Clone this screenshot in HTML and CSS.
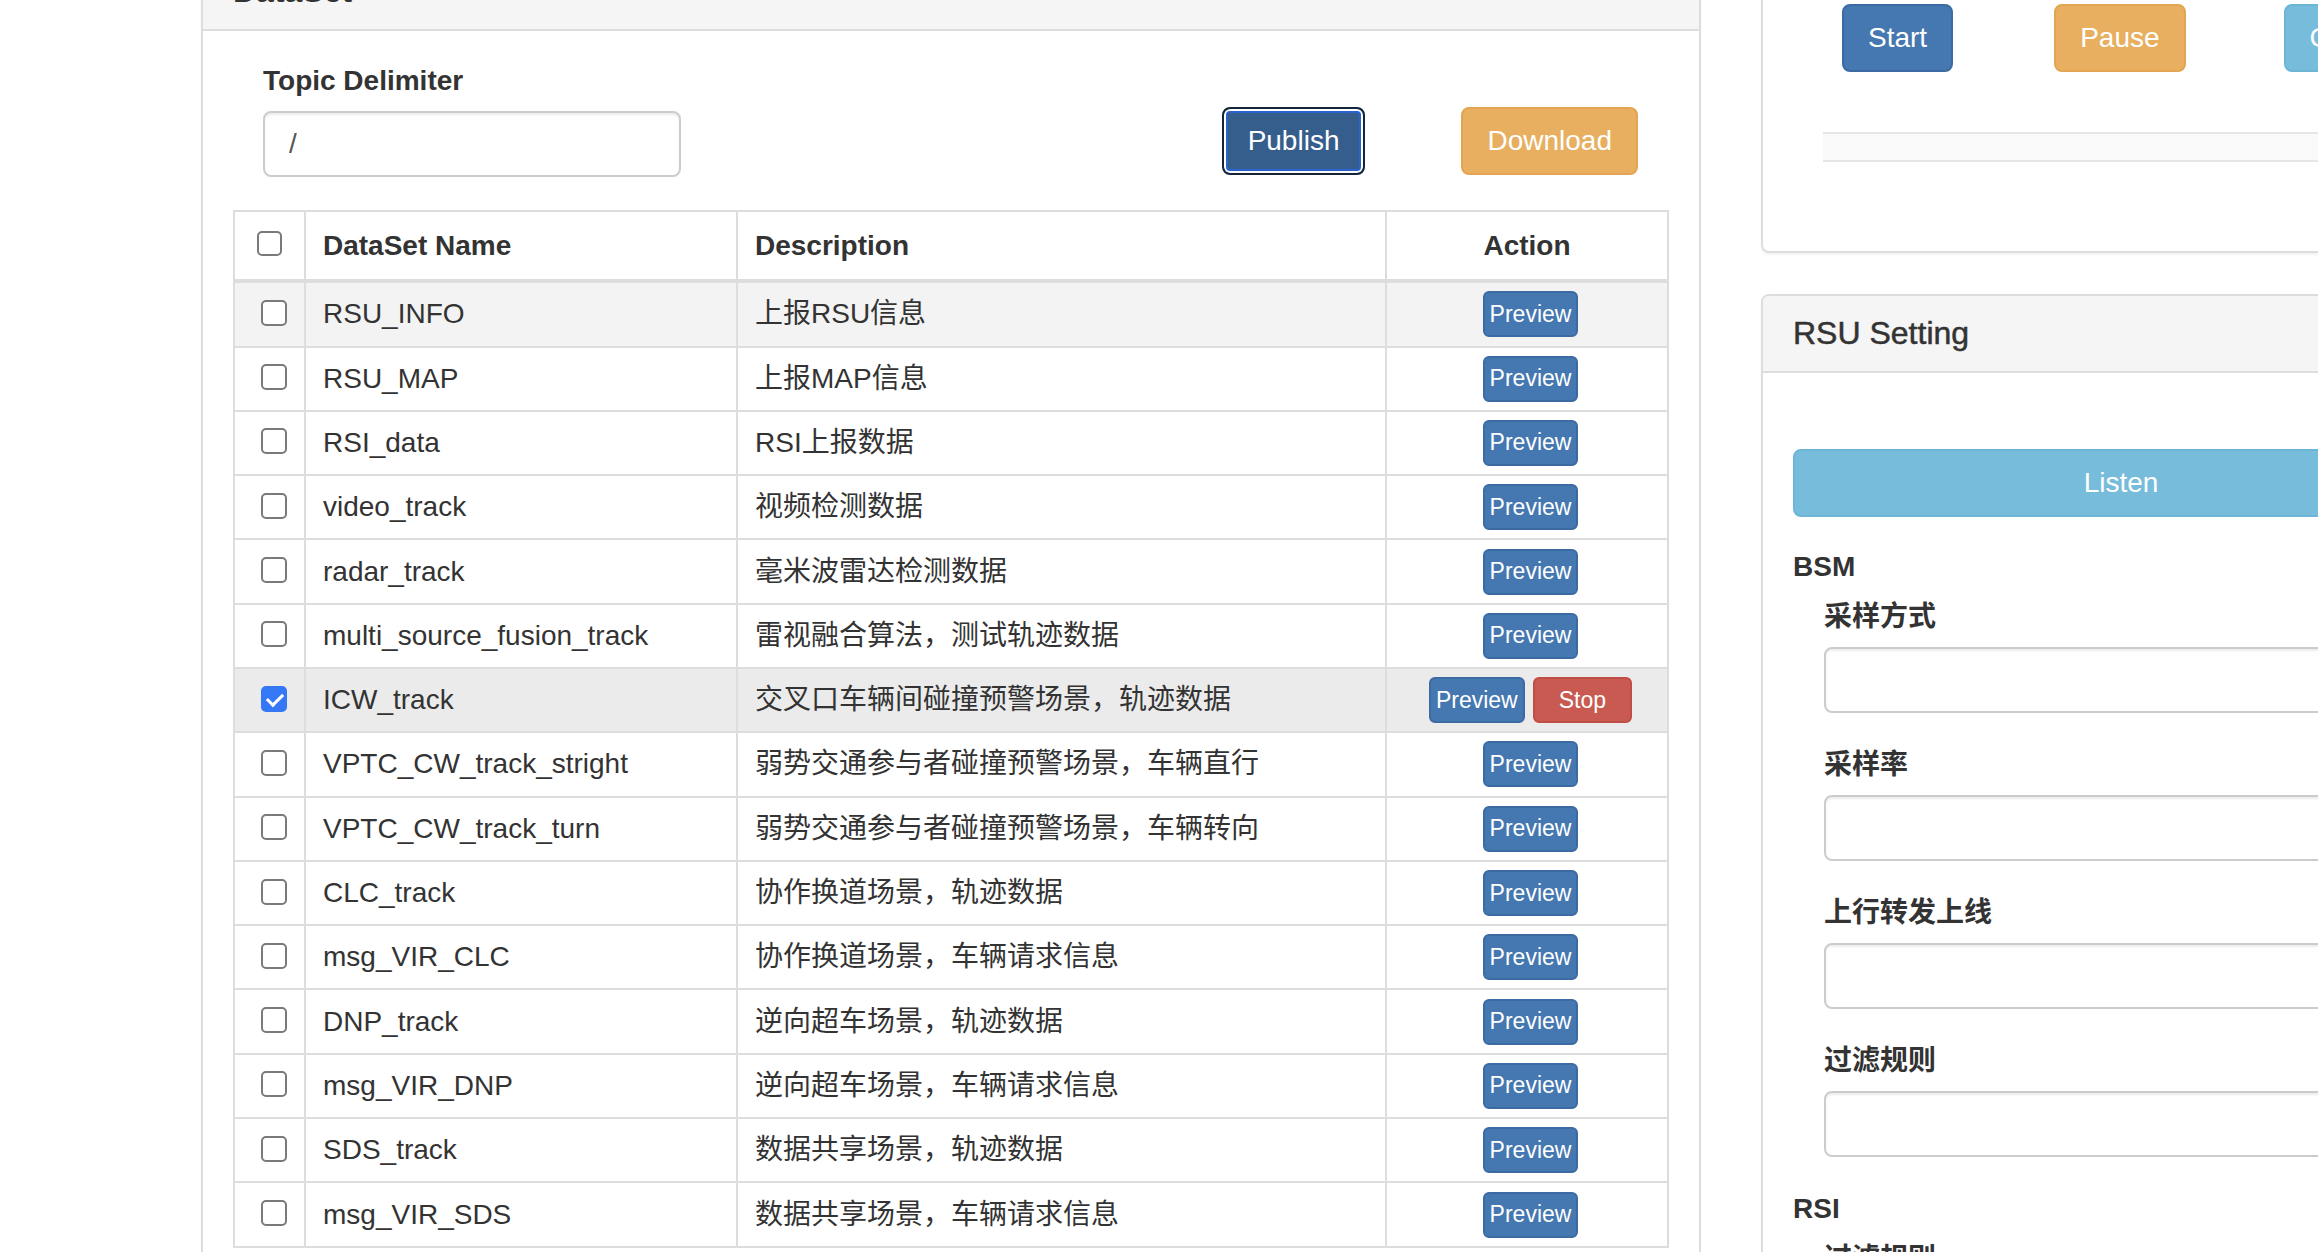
FILE: index.html
```html
<!DOCTYPE html>
<html lang="zh-CN">
<head>
<meta charset="utf-8">
<title>RSU DataSet</title>
<link rel="stylesheet" href="styles.css">
</head>
<body>
<div class="page">
  <section class="panel panel-dataset">
    <div class="panel-heading"><h3 class="panel-title strong">DataSet</h3></div>
    <div class="panel-body">
      <div class="topic-row">
        <div class="topic-group">
          <label class="field-label" for="delim">Topic Delimiter</label>
          <input id="delim" class="form-control topic-input" type="text" value="/">
        </div>
        <div class="topic-actions">
          <button class="btn btn-focus">Publish</button>
          <button class="btn btn-warning">Download</button>
        </div>
      </div>
      <table class="ds-table">
        <colgroup>
          <col class="c1"><col class="c2"><col class="c3"><col class="c4">
        </colgroup>
        <thead>
          <tr>
            <th class="col-check"><input type="checkbox" class="cb cb-head"></th>
            <th>DataSet Name</th>
            <th>Description</th>
            <th class="col-action">Action</th>
          </tr>
        </thead>
        <tbody>
          <tr class="row-hover">
            <td class="col-check"><input type="checkbox" class="cb"></td>
            <td>RSU_INFO</td><td>上报RSU信息</td>
            <td class="col-action"><div class="actions"><button class="btn btn-primary btn-xs">Preview</button></div></td>
          </tr>
          <tr>
            <td class="col-check"><input type="checkbox" class="cb"></td>
            <td>RSU_MAP</td><td>上报MAP信息</td>
            <td class="col-action"><div class="actions"><button class="btn btn-primary btn-xs">Preview</button></div></td>
          </tr>
          <tr>
            <td class="col-check"><input type="checkbox" class="cb"></td>
            <td>RSI_data</td><td>RSI上报数据</td>
            <td class="col-action"><div class="actions"><button class="btn btn-primary btn-xs">Preview</button></div></td>
          </tr>
          <tr>
            <td class="col-check"><input type="checkbox" class="cb"></td>
            <td>video_track</td><td>视频检测数据</td>
            <td class="col-action"><div class="actions"><button class="btn btn-primary btn-xs">Preview</button></div></td>
          </tr>
          <tr>
            <td class="col-check"><input type="checkbox" class="cb"></td>
            <td>radar_track</td><td>毫米波雷达检测数据</td>
            <td class="col-action"><div class="actions"><button class="btn btn-primary btn-xs">Preview</button></div></td>
          </tr>
          <tr>
            <td class="col-check"><input type="checkbox" class="cb"></td>
            <td>multi_source_fusion_track</td><td>雷视融合算法，测试轨迹数据</td>
            <td class="col-action"><div class="actions"><button class="btn btn-primary btn-xs">Preview</button></div></td>
          </tr>
          <tr class="row-active">
            <td class="col-check"><input type="checkbox" class="cb" checked></td>
            <td>ICW_track</td><td>交叉口车辆间碰撞预警场景，轨迹数据</td>
            <td class="col-action"><div class="actions"><button class="btn btn-primary btn-xs">Preview</button><button class="btn btn-danger btn-xs btn-stop">Stop</button></div></td>
          </tr>
          <tr>
            <td class="col-check"><input type="checkbox" class="cb"></td>
            <td>VPTC_CW_track_stright</td><td>弱势交通参与者碰撞预警场景，车辆直行</td>
            <td class="col-action"><div class="actions"><button class="btn btn-primary btn-xs">Preview</button></div></td>
          </tr>
          <tr>
            <td class="col-check"><input type="checkbox" class="cb"></td>
            <td>VPTC_CW_track_turn</td><td>弱势交通参与者碰撞预警场景，车辆转向</td>
            <td class="col-action"><div class="actions"><button class="btn btn-primary btn-xs">Preview</button></div></td>
          </tr>
          <tr>
            <td class="col-check"><input type="checkbox" class="cb"></td>
            <td>CLC_track</td><td>协作换道场景，轨迹数据</td>
            <td class="col-action"><div class="actions"><button class="btn btn-primary btn-xs">Preview</button></div></td>
          </tr>
          <tr>
            <td class="col-check"><input type="checkbox" class="cb"></td>
            <td>msg_VIR_CLC</td><td>协作换道场景，车辆请求信息</td>
            <td class="col-action"><div class="actions"><button class="btn btn-primary btn-xs">Preview</button></div></td>
          </tr>
          <tr>
            <td class="col-check"><input type="checkbox" class="cb"></td>
            <td>DNP_track</td><td>逆向超车场景，轨迹数据</td>
            <td class="col-action"><div class="actions"><button class="btn btn-primary btn-xs">Preview</button></div></td>
          </tr>
          <tr>
            <td class="col-check"><input type="checkbox" class="cb"></td>
            <td>msg_VIR_DNP</td><td>逆向超车场景，车辆请求信息</td>
            <td class="col-action"><div class="actions"><button class="btn btn-primary btn-xs">Preview</button></div></td>
          </tr>
          <tr>
            <td class="col-check"><input type="checkbox" class="cb"></td>
            <td>SDS_track</td><td>数据共享场景，轨迹数据</td>
            <td class="col-action"><div class="actions"><button class="btn btn-primary btn-xs">Preview</button></div></td>
          </tr>
          <tr>
            <td class="col-check"><input type="checkbox" class="cb"></td>
            <td>msg_VIR_SDS</td><td>数据共享场景，车辆请求信息</td>
            <td class="col-action"><div class="actions"><button class="btn btn-primary btn-xs">Preview</button></div></td>
          </tr>
        </tbody>
      </table>
    </div>
  </section>

  <aside class="side">
    <section class="panel panel-control">
      <div class="panel-body control-body">
        <div class="control-buttons">
          <button class="btn btn-primary btn-start">Start</button>
          <button class="btn btn-warning btn-pause">Pause</button>
          <button class="btn btn-info btn-clear">Clear</button>
        </div>
        <div class="status-bar"></div>
      </div>
    </section>

    <section class="panel panel-rsu">
      <div class="panel-heading"><h3 class="panel-title medium">RSU Setting</h3></div>
      <div class="panel-body">
        <button class="btn btn-info btn-block">Listen</button>
        <h4 class="group-title">BSM</h4>
        <div class="form-group">
          <label class="field-label">采样方式</label>
          <input class="form-control" type="text">
        </div>
        <div class="form-group">
          <label class="field-label">采样率</label>
          <input class="form-control" type="text">
        </div>
        <div class="form-group">
          <label class="field-label">上行转发上线</label>
          <input class="form-control" type="text">
        </div>
        <div class="form-group">
          <label class="field-label">过滤规则</label>
          <input class="form-control" type="text">
        </div>
        <h4 class="group-title">RSI</h4>
        <div class="form-group">
          <label class="field-label">过滤规则</label>
          <input class="form-control" type="text">
        </div>
      </div>
    </section>
  </aside>
</div>
</body>
</html>
```

FILE: styles.css
```css
* { box-sizing: border-box; }
html, body { margin: 0; padding: 0; }
body {
  background: #fff;
  color: #333;
  font-family: "Liberation Sans", "Noto Sans CJK SC", Arial, sans-serif;
  font-size: 28px;
  line-height: 40px;
  height: 1252px;
  overflow: hidden;
}
.page {
  display: flex;
  align-items: flex-start;
  gap: 60px;
  padding-left: 201px;
  width: 2700px;
}

/* panels */
.panel {
  background: #fff;
  border: 2px solid #ddd;
  border-radius: 8px;
  box-shadow: 0 2px 2px rgba(0, 0, 0, 0.05);
}
.panel-heading {
  background: #f5f5f5;
  border-bottom: 2px solid #ddd;
  padding: 20px 30px;
  border-radius: 6px 6px 0 0;
}
.panel-title {
  margin: 0;
  font-size: 32px;
  line-height: 35.2px;
  font-weight: normal;
  color: #333;
}
.panel-title.strong { font-weight: bold; }
.panel-title.medium { -webkit-text-stroke: 0.5px #333; }
.panel-body { padding: 30px; }

.panel-dataset {
  flex: none;
  width: 1500px;
  margin-top: -48px;
}

/* topic row */
.topic-row { display: flex; align-items: flex-start; }
.topic-group { padding-left: 30px; }
.field-label {
  display: block;
  font-weight: bold;
  line-height: 40px;
  margin-bottom: 10px;
}
.form-control {
  display: block;
  height: 66px;
  border: 2px solid #ccc;
  border-radius: 8px;
  padding: 0 24px;
  font-family: inherit;
  font-size: 28px;
  color: #555;
  background: #fff;
  box-shadow: inset 0 2px 2px rgba(0, 0, 0, 0.075);
  outline: none;
}
.topic-input { width: 418px; }
.topic-actions {
  margin-left: auto;
  margin-top: 46px;
  display: flex;
  gap: 96px;
  padding-right: 31px;
}

/* buttons */
.btn {
  display: inline-flex;
  align-items: center;
  justify-content: center;
  height: 68px;
  padding: 0 24px;
  border: 2px solid transparent;
  border-radius: 8px;
  font-family: inherit;
  font-size: 28px;
  color: #fff;
  white-space: nowrap;
  cursor: pointer;
}
.btn-primary { background: #4577b0; border-color: #3c6ba3; }
.btn-focus {
  background: #365e8c;
  border-color: #14253a;
  color: #fff;
  box-shadow: inset 0 0 0 2px #fff, inset 0 0 0 4px #2a62cf;
}
.btn-warning { background: #e7af5f; border-color: #e2a553; }
.btn-danger { background: #c95a51; border-color: #c04e46; }
.btn-info { background: #77bcdb; border-color: #6cb5d7; }
.btn-xs {
  height: 46px;
  font-size: 23px;
  padding: 0 5px;
  border-radius: 6px;
}
.btn-stop { padding: 0 24px; }
.btn-block { display: flex; width: 100%; margin-top: 46px; }

/* table */
.ds-table {
  margin-top: 33px;
  width: 1436px;
  table-layout: fixed;
  border-collapse: separate;
  border-spacing: 0;
  border-top: 2px solid #ddd;
  border-left: 2px solid #ddd;
}
.c1 { width: 71px; }
.c2 { width: 432px; }
.c3 { width: 649px; }
.c4 { width: 282px; }
.ds-table th,
.ds-table td {
  border-right: 2px solid #ddd;
  border-bottom: 2px solid #ddd;
  padding: 0 17px;
  vertical-align: middle;
  text-align: left;
  white-space: nowrap;
  line-height: 40px;
}
.ds-table thead tr { height: 71px; }
.ds-table thead th { border-bottom-width: 4px; font-weight: bold; }
.ds-table tbody tr { height: 64.3px; }
.ds-table td.col-check { padding-left: 26px; padding-bottom: 3px; }
.ds-table th.col-check { padding-left: 22px; padding-bottom: 4px; }
.ds-table th.col-action { text-align: center; }
.ds-table td.col-action { padding-left: 24px; }
.row-hover td { background: #f3f3f3; }
.row-active td { background: #ebebeb; }
.actions { display: flex; justify-content: center; gap: 8px; }

/* checkboxes */
.cb {
  -webkit-appearance: none;
  appearance: none;
  display: block;
  margin: 0;
  width: 26px;
  height: 26px;
  border: 2px solid #7a7a7a;
  border-radius: 5px;
  background: #fff;
  position: relative;
}
.cb-head { width: 25px; height: 25px; }
.cb:checked { background: #3478f6; border-color: #3478f6; }
.cb:checked::after {
  content: "";
  position: absolute;
  left: 7px;
  top: 2px;
  width: 7px;
  height: 13px;
  border: solid #fff;
  border-width: 0 3.5px 3.5px 0;
  transform: rotate(45deg);
}

/* right side */
.side {
  flex: none;
  width: 720px;
  margin-top: -40px;
}
.panel-control .control-body { padding: 42px 30px 89px; }
.control-buttons { display: flex; }
.btn-start { margin-left: 49px; }
.btn-pause { margin-left: 101px; }
.btn-clear { margin-left: 98px; }
.status-bar {
  margin-top: 60px;
  margin-left: 30px;
  height: 30px;
  background: #f9f9f9;
  border-top: 2px solid #e6e6e6;
  border-bottom: 2px solid #e6e6e6;
}
.panel-rsu { margin-top: 41px; }
.group-title {
  margin: 30px 0 10px;
  font-size: 28px;
  line-height: 40px;
  font-weight: bold;
}
.form-group { padding-left: 31px; margin-bottom: 32px; }
.form-group .form-control { width: 100%; }
```
